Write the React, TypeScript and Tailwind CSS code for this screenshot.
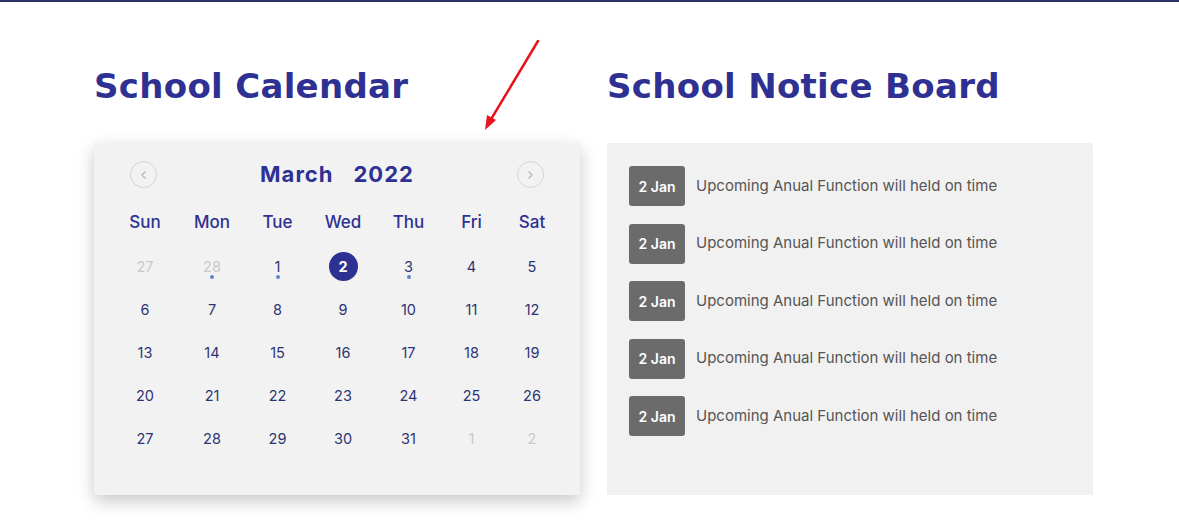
const NAVY = '#2e3192';

type Day = { n: number; muted?: boolean; dot?: boolean; active?: boolean };

const weeks: Day[][] = [
    [{ n: 27, muted: true }, { n: 28, muted: true, dot: true }, { n: 1, dot: true }, { n: 2, active: true }, { n: 3, dot: true }, { n: 4 }, { n: 5 }],
    [6, 7, 8, 9, 10, 11, 12].map((n) => ({ n })),
    [13, 14, 15, 16, 17, 18, 19].map((n) => ({ n })),
    [20, 21, 22, 23, 24, 25, 26].map((n) => ({ n })),
    [{ n: 27 }, { n: 28 }, { n: 29 }, { n: 30 }, { n: 31 }, { n: 1, muted: true }, { n: 2, muted: true }],
];

const dayNames = ['Sun', 'Mon', 'Tue', 'Wed', 'Thu', 'Fri', 'Sat'];
const cols = 'grid grid-cols-[68px_66px_65px_66px_65px_61px_60px] pl-[17px]';

const Chevron = ({ dir }: { dir: 'left' | 'right' }) => (
    <div className="flex h-[27px] w-[27px] items-center justify-center rounded-full border border-[#d4d4d4]">
        <svg width="10" height="10" viewBox="0 0 10 10" fill="none" stroke="#b8b8b8" strokeWidth="1.4" strokeLinecap="round" strokeLinejoin="round">
            {dir === 'left' ? <path d="M6 2 L3 5 L6 8" /> : <path d="M4 2 L7 5 L4 8" />}
        </svg>
    </div>
);

const Calendar = () => (
    <div className="h-[352px] w-[486px] bg-[#f2f2f2] pt-[18px] shadow-[0_6px_16px_rgba(0,0,0,0.22)]">
        {/* month header */}
        <div className="mb-[13px] flex h-[27px] items-center justify-between pl-[36px] pr-[36px]">
            <Chevron dir="left" />
            <div className="flex gap-[20px] text-[22px] font-bold tracking-[1px] text-[#2e3192] font-['Inter',sans-serif]">
                <span>March</span>
                <span>2022</span>
            </div>
            <Chevron dir="right" />
        </div>

        <div className={cols}>
            {dayNames.map((d) => (
                <div key={d} className="flex h-[43px] items-center justify-center text-[17px] font-medium text-[#2e3192]">
                    {d}
                </div>
            ))}
        </div>

        {weeks.map((week, i) => (
            <div key={i} className={cols}>
                {week.map((d, j) => (
                    <div key={j} className="relative flex h-[43px] items-center justify-center pt-[2px] text-[14.5px]">
                        {d.active ? (
                            <span className="flex h-[29px] w-[29px] items-center justify-center rounded-full bg-[#2e3192] font-bold text-white">
                                {d.n}
                            </span>
                        ) : (
                            <span className={d.muted ? 'text-[#c9c9c9]' : 'text-[#2d3473]'}>{d.n}</span>
                        )}
                        {d.dot && <span className="absolute left-1/2 top-[31px] h-[4px] w-[4px] -translate-x-1/2 rounded-full bg-[#5f86cc]"></span>}
                    </div>
                ))}
            </div>
        ))}
    </div>
);

const NoticeBoard = () => (
    <div className="flex h-[352px] w-[486px] flex-col gap-[17.5px] rounded-[2px] bg-[#f1f1f1] pl-[22px] pt-[23px]">
        {[0, 1, 2, 3, 4].map((i) => (
            <div key={i} className="flex items-center gap-[11px]">
                <span className="flex h-[40px] w-[56px] items-center justify-center rounded-[3px] bg-[#6b6b6b] text-[14px] font-semibold text-white">
                    2 Jan
                </span>
                <span className="text-[15px] text-[#555555]">Upcoming Anual Function will held on time</span>
            </div>
        ))}
    </div>
);

const App = () => {
    return (
        <div className="relative h-[525px] w-[1179px] overflow-hidden border-t-2 border-[#2d3065] bg-white font-['Inter',sans-serif]">
            <div className="flex gap-[27px] pl-[94px] pt-[58px]">
                <div className="flex flex-col gap-[30px]">
                    <h2 className="h-[53px] text-[34px] font-bold leading-[53px] tracking-[0.3px] text-[#2e3192] font-['DejaVu_Sans',sans-serif]">
                        School Calendar
                    </h2>
                    <Calendar />
                </div>
                <div className="flex flex-col gap-[30px]">
                    <h2 className="h-[53px] text-[34px] font-bold leading-[53px] tracking-[0.3px] text-[#2e3192] font-['DejaVu_Sans',sans-serif]">
                        School Notice Board
                    </h2>
                    <NoticeBoard />
                </div>
            </div>

            {/* annotation arrow */}
            <svg className="absolute left-0 top-0" width="1179" height="525" fill="none">
                <line x1="538" y1="39" x2="490" y2="119" stroke="#e8141b" strokeWidth="2.5" strokeLinecap="round" />
                <path d="M485 128 L487 113 L496 118 Z" fill="#e8141b" />
            </svg>
        </div>
    );
};

export default App;
